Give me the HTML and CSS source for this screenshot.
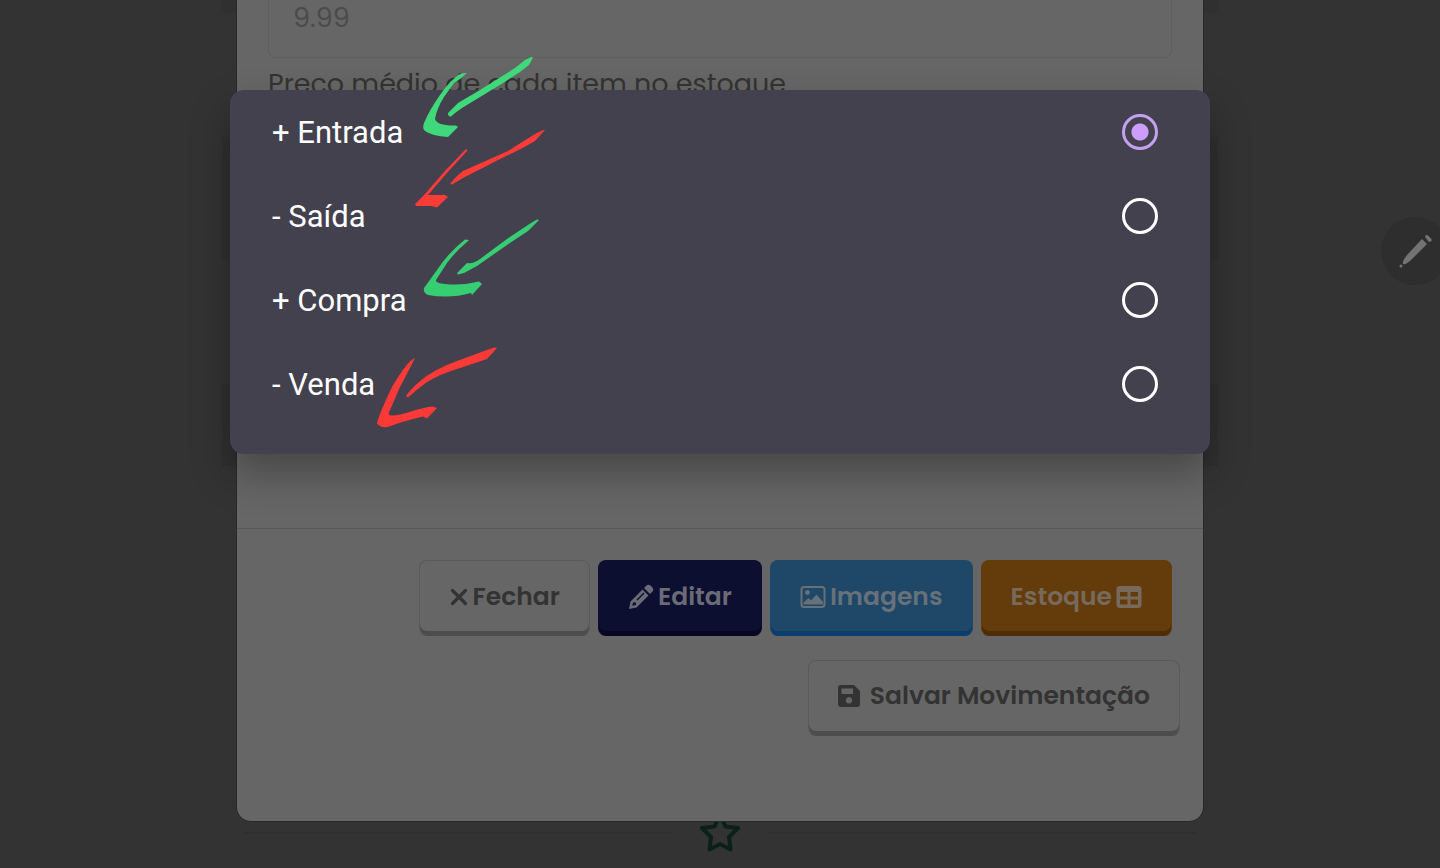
FILE: index.html
```html
<!DOCTYPE html>
<html lang="pt-BR">
<head>
  <meta charset="UTF-8">
  <meta name="viewport" content="width=device-width, initial-scale=1">
  <title>Movimentação de Estoque</title>
  <link rel="stylesheet" href="styles.css">
</head>
<body>
  <!-- Page behind the modal -->
  <main class="page">
    <div class="block block-first"></div>
    <div class="block block-tall"></div>
    <div class="block"></div>
    <div class="divider">
      <hr>
      <svg class="star" viewBox="0 0 44 44" aria-hidden="true">
        <path d="M22 4 L27.5 15.500 L40 17 L31 26 L32.500 38.500 L22 33 L11.500 38.500 L13 26 L4 17 L16.500 15.500 Z" fill="none" stroke="#0a2018" stroke-width="4" stroke-linejoin="round"/>
      </svg>
      <hr>
    </div>
  </main>

  <button class="fab" type="button" aria-label="Editar página">
    <svg viewBox="0 0 68 68" aria-hidden="true">
      <path d="M41 22 L46 27 L30 43 Q25 48 22 47 Q21 44 26 38 Z M46 18 Q47 18 51 23 Q50 25 48 25 L44 20 Q44 18 46 18 Z" fill="#737373"/>
      <circle cx="20" cy="49" r="1.500" fill="#737373"/>
    </svg>
  </button>

  <section class="modal">
    <div class="modal-body">
      <input class="price" id="price" type="text" placeholder="9.99">
      <label class="hint" for="price">Preço médio de cada item no estoque</label>
    </div>
    <div class="modal-footer">
      <div class="actions">
        <button class="btn btn-light" type="button">
          <svg class="icon-x" viewBox="0 0 20 20" aria-hidden="true"><path d="M3.500 3.500 L16.500 16.500 M16.500 3.500 L3.500 16.500" stroke="currentColor" stroke-width="3.200" stroke-linecap="round"/></svg>
          Fechar
        </button>
        <button class="btn btn-navy" type="button">
          <svg viewBox="0 0 26 26" aria-hidden="true">
            <path fill="currentColor" fill-rule="evenodd" d="M1 25 L2.500 17.500 L14.500 5.500 L20.500 11.500 L8.500 23.500 Z M5 18 L4.300 21.700 L8 21 V18.500 H5 Z M8.500 15.500 L15.500 8.500 L16.500 9.500 L9.500 16.500 Z"/>
            <path fill="currentColor" d="M16 4 L18.500 1.500 Q20.500 0 22.500 1.500 L24.500 3.500 Q26 5.500 24.500 7.500 L22 10 Z"/>
          </svg>
          Editar
        </button>
        <button class="btn btn-blue" type="button">
          <svg viewBox="0 0 26 26" aria-hidden="true">
            <rect x="1.500" y="3" width="23" height="20" rx="2.500" fill="none" stroke="currentColor" stroke-width="2"/>
            <circle cx="7.500" cy="8.500" r="2.400" fill="currentColor"/>
            <path fill="currentColor" d="M3.500 20.500 V18.500 L8.500 14 L11 16.500 L16.500 10.500 L23 18 V20.500 Z"/>
          </svg>
          Imagens
        </button>
        <button class="btn btn-orange" type="button">
          Estoque
          <svg viewBox="0 0 26 26" aria-hidden="true">
            <path fill="currentColor" fill-rule="evenodd" d="M4 2 H22 Q25.500 2 25.500 5 V21 Q25.500 24 22 24 H4 Q.5 24 .5 21 V5 Q.5 2 4 2 Z M4 8 V12.500 H11.500 V8 Z M14.500 8 V12.500 H22 V8 Z M4 15.500 V20.500 H11.500 V15.500 Z M14.500 15.500 V20.500 H22 V15.500 Z"/>
          </svg>
        </button>
      </div>
      <button class="btn btn-light btn-save" type="button">
        <svg viewBox="0 0 26 26" aria-hidden="true">
          <path fill="currentColor" fill-rule="evenodd" d="M4.500 2 H18 L24 8 V21 Q24 24 21 24 H5 Q2 24 2 21 V5 Q2 2 4.500 2 Z M5.500 5.500 V11 H17 V5.500 Z M13 14 A3.300 3.300 0 1 0 13.010 14 Z"/>
        </svg>
        Salvar Movimentação
      </button>
    </div>
  </section>

  <!-- Option list of the movement type -->
  <div class="picker" role="dialog" aria-label="Tipo de movimentação">
    <label class="option">+ Entrada <input type="radio" name="tipo" checked></label>
    <label class="option">- Saída <input type="radio" name="tipo"></label>
    <label class="option">+ Compra <input type="radio" name="tipo"></label>
    <label class="option">- Venda <input type="radio" name="tipo"></label>

    <!-- Hand-drawn arrows -->
    <svg class="arrows" viewBox="370 50 180 380" aria-hidden="true">
      <g fill="#3fd97b">
        <path d="M467 73 L461 73.500 Q450 80 440 95 Q430 109 424 123 Q422 128 425 131 Q432 136 448 137 L458 127 L456 125.500 Q437 126 435 119 Q437 108 444 97 L454 83 L460 79 Z"/>
        <path d="M533 57.500 L531 57 L525 60 L515 68 L480 90 L458 103 L448 113 Q448 117 451 116.500 L455 113 L462 108 L503 83 L520 72 L529 65 Z"/>
      </g>
      <g fill="#fb3b38">
        <path d="M467 149 L465 150 L444 172 L425 194 L415 204 L416 206 L431 206 L437 207.500 L448 197 L445 195 L428 195 L446 174 L467 151 Z"/>
        <path d="M545 130 L542 130.500 L535 134 L508 151 L463 171 Q457 175 450 184 L452 184.500 L463 178 L500 159 Q520 150 535 141 Z"/>
      </g>
      <g fill="#37cd73">
        <path d="M469 240 L465 239.500 Q448 253 437 270 L424 288 Q423 293 428 295 Q450 299 471 293 L472 295 L482 284 L479 281.500 Q461 286 445 284 Q435 283 436 280 L447 263 Q456 251 467 242 Z"/>
        <path d="M539 220 L537 219.500 L531 223 L507 239 L480 259 Q474 264 467 263 L457 273 L458 274.500 L464 273 L477 266 L507 245 L528 231 Z"/>
      </g>
      <g fill="#fb3a37">
        <path d="M415 358 Q408 360 392 387 Q380 412 377 423 Q379 428 388 427 Q400 422 423 416.500 L427 418.500 L437 408 L433 406.500 Q421 408 413 411 Q397 416 391 415.500 Q387 415 390 410 L400 387 L410 368 Z"/>
        <path d="M497 348 L494 347.500 L487 350 L457 361 Q434 369 419 382 Q410 390 406 396 L408 397.500 Q417 389 427 382 Q440 374 460 368 L487 359 Z"/>
      </g>
    </svg>
  </div>
</body>
</html>
```
FILE: styles.css
```css
* {
  box-sizing: border-box;
}

body {
  margin: 0;
  position: relative;
  min-height: 100vh;
  overflow: hidden;
  background: #333;
  color: #333;
  font-family: 'Poppins', 'Inter', sans-serif;
}

/* Page in the background */
.page {
  max-width: 996px;
  margin: 0 auto;
}

.block {
  height: 82px;
  margin-bottom: 123px;
  background: #303030;
}

.block-first {
  height: 14px;
}

.block-tall {
  height: 124px;
}

.divider {
  display: flex;
  align-items: center;
  gap: 26px;
  padding: 0 22px;
  margin-top: 345px;
}

.divider hr {
  flex: 1;
  height: 2px;
  margin: 0;
  border: 0;
  background: #2f2f2f;
}

.star {
  width: 44px;
  height: 44px;
}

.fab {
  position: absolute;
  top: 217px;
  right: -9px;
  width: 68px;
  height: 68px;
  padding: 0;
  border: 0;
  border-radius: 50%;
  background: #2e2e2e;
}

.fab svg {
  display: block;
}

/* Modal */
.modal {
  position: absolute;
  top: 0;
  left: 0;
  right: 0;
  max-width: 966px;
  margin: 0 auto;
  background: #666;
  border-radius: 0 0 14px 14px;
  box-shadow: 0 0 0 1px #292929;
}

.modal-body {
  min-height: 528px;
  padding: 0 31px;
}

.price {
  display: block;
  width: 100%;
  height: 58px;
  padding: 0 24px 22px;
  border: 1px solid #5e5e5e;
  border-top: 0;
  border-radius: 0 0 8px 8px;
  background: transparent;
  color: #4b4b4b;
  font: 27px 'Poppins', 'Inter', sans-serif;
}

.price::placeholder {
  color: #4b4b4b;
}

.hint {
  display: block;
  margin-top: 6px;
  font-size: 27px;
  line-height: 40px;
}

.modal-footer {
  display: flex;
  flex-direction: column;
  align-items: flex-end;
  gap: 24px;
  padding: 31px 23px 85px;
  border-top: 1px solid #58595b;
}

.actions {
  display: flex;
  flex-wrap: wrap;
  justify-content: flex-end;
  gap: 8px;
  margin-right: 8px;
}

.btn {
  display: flex;
  align-items: center;
  gap: 4px;
  height: 76px;
  padding: 0 29px 3px;
  border: 1px solid transparent;
  border-radius: 8px;
  font: 600 25px 'Poppins', 'Inter', sans-serif;
  cursor: pointer;
}

.btn svg {
  width: 26px;
  height: 26px;
}

.btn .icon-x {
  width: 20px;
  height: 20px;
}

.btn-light {
  background: #666;
  border-color: #5a5a5a;
  border-bottom-color: #4d4d4d;
  box-shadow: inset 0 -4px #4d4d4d;
  color: #333;
}

.btn-navy {
  background: #0d0f30;
  border-color: #0d0f30;
  border-bottom-color: #07081f;
  box-shadow: inset 0 -4px #07081f;
  color: #6b6b78;
}

.btn-blue {
  background: #1f4768;
  border-color: #1f4768;
  border-bottom-color: #0d3d6b;
  box-shadow: inset 0 -4px #0d3d6b;
  color: #66717a;
}

.btn-orange {
  background: #643b0b;
  border-color: #643b0b;
  border-bottom-color: #4f2c05;
  box-shadow: inset 0 -4px #4f2c05;
  color: #776a5c;
}

.btn-save {
  gap: 8px;
  padding: 0 29px 5px 27px;
}

/* Option picker */
.picker {
  position: absolute;
  top: 90px;
  left: 0;
  right: 0;
  max-width: 980px;
  margin: 0 auto;
  padding-bottom: 28px;
  background: #44414e;
  border-radius: 14px;
  box-shadow: 0 20px 40px rgba(0, 0, 0, 0.3);
}

.option {
  display: flex;
  align-items: center;
  justify-content: space-between;
  height: 84px;
  padding: 0 52px 0 42px;
  color: #fff;
  font-family: 'Roboto', sans-serif;
  font-size: 31px;
}

.option input {
  appearance: none;
  width: 36px;
  height: 36px;
  margin: 0;
  border: 3px solid #fff;
  border-radius: 50%;
}

.option input:checked {
  border-color: #c4a0ef;
  background: radial-gradient(circle, #cb9dff 8px, transparent 9px);
}

.arrows {
  position: absolute;
  top: -40px;
  left: 140px;
  width: 180px;
  height: 380px;
  pointer-events: none;
}
```
